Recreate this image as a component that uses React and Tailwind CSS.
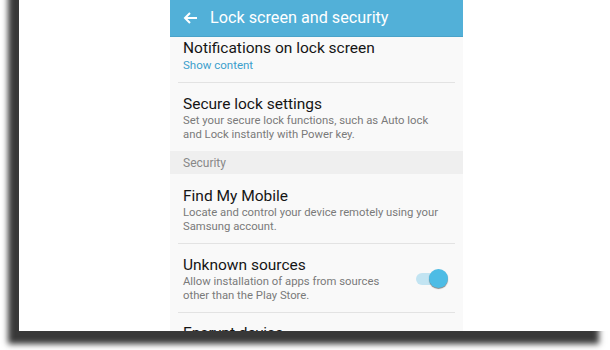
import React from 'react';

const font = { fontFamily: 'Roboto, "Noto Sans", sans-serif' };

function Row({ title, children, right, className = '' }) {
  return (
    <div className={`flex items-center pl-[13px] pr-[15px] ${className}`}>
      <div className="flex-1">
        <div className="text-[15.5px] leading-[20px] text-[#151515]">{title}</div>
        {children}
      </div>
      {right}
    </div>
  );
}

function Divider() {
  return <div className="mx-[8px] h-px bg-[#e3e3e3]" />;
}

function Desc({ children }) {
  return <div className="text-[11.3px] leading-[13.5px] text-[#7a7a7a]">{children}</div>;
}

function Toggle() {
  return (
    <div className="relative h-[19px] w-[32px] shrink-0">
      <div className="absolute left-0 top-[3.5px] h-[12px] w-[26px] rounded-full bg-[#c2e4f2]" />
      <div className="absolute right-0 top-0 h-[19px] w-[19px] rounded-full bg-[#4dbce5] shadow-[0_1px_1px_rgba(0,0,0,0.45)]" />
    </div>
  );
}

export default function App() {
  return (
    <div className="h-[350px] w-[610px] overflow-hidden bg-white" style={font}>
      <div className="-mt-[20px] ml-[19px] h-[351px] bg-white pl-[151px] pt-[20px] shadow-[-11px_13px_6px_rgba(0,0,0,0.78)]">
        <div className="h-full w-[293px] overflow-hidden bg-[#f9f9f9]">
          {/* header */}
          <div className="flex h-[37px] items-center border-b border-[#4aa3c9] bg-[#52b0d8] pl-[13px]">
            <svg width="15" height="12" viewBox="0 0 15 12" fill="none" stroke="white" strokeWidth="2">
              <path d="M14 6H2M7 1L2 6l5 5" />
            </svg>
            <span className="ml-[12px] text-[16.2px] leading-[20px] text-white">Lock screen and security</span>
          </div>

          <Row title="Notifications on lock screen" className="pb-[10px] pt-[1px]">
            <div className="text-[11.5px] leading-[14px] text-[#3c9fcc]">Show content</div>
          </Row>
          <Divider />
          <Row title="Secure lock settings" className="pb-[10px] pt-[11px]">
            <Desc>
              Set your secure lock functions, such as Auto lock
              <br />
              and Lock instantly with Power key.
            </Desc>
          </Row>

          <div className="flex h-[23px] items-center bg-[#efefef] pl-[13px] text-[12px] text-[#888]">Security</div>

          <Row title="Find My Mobile" className="pb-[10px] pt-[12px]">
            <Desc>
              Locate and control your device remotely using your
              <br />
              Samsung account.
            </Desc>
          </Row>
          <Divider />
          <Row title="Unknown sources" className="pb-[10px] pt-[11px]" right={<Toggle />}>
            <Desc>
              Allow installation of apps from sources
              <br />
              other than the Play Store.
            </Desc>
          </Row>
          <Divider />
          <Row title="Encrypt device" className="pt-[10px]">
            <Desc>Protect your device by encrypting its data.</Desc>
          </Row>
        </div>
      </div>
    </div>
  );
}
